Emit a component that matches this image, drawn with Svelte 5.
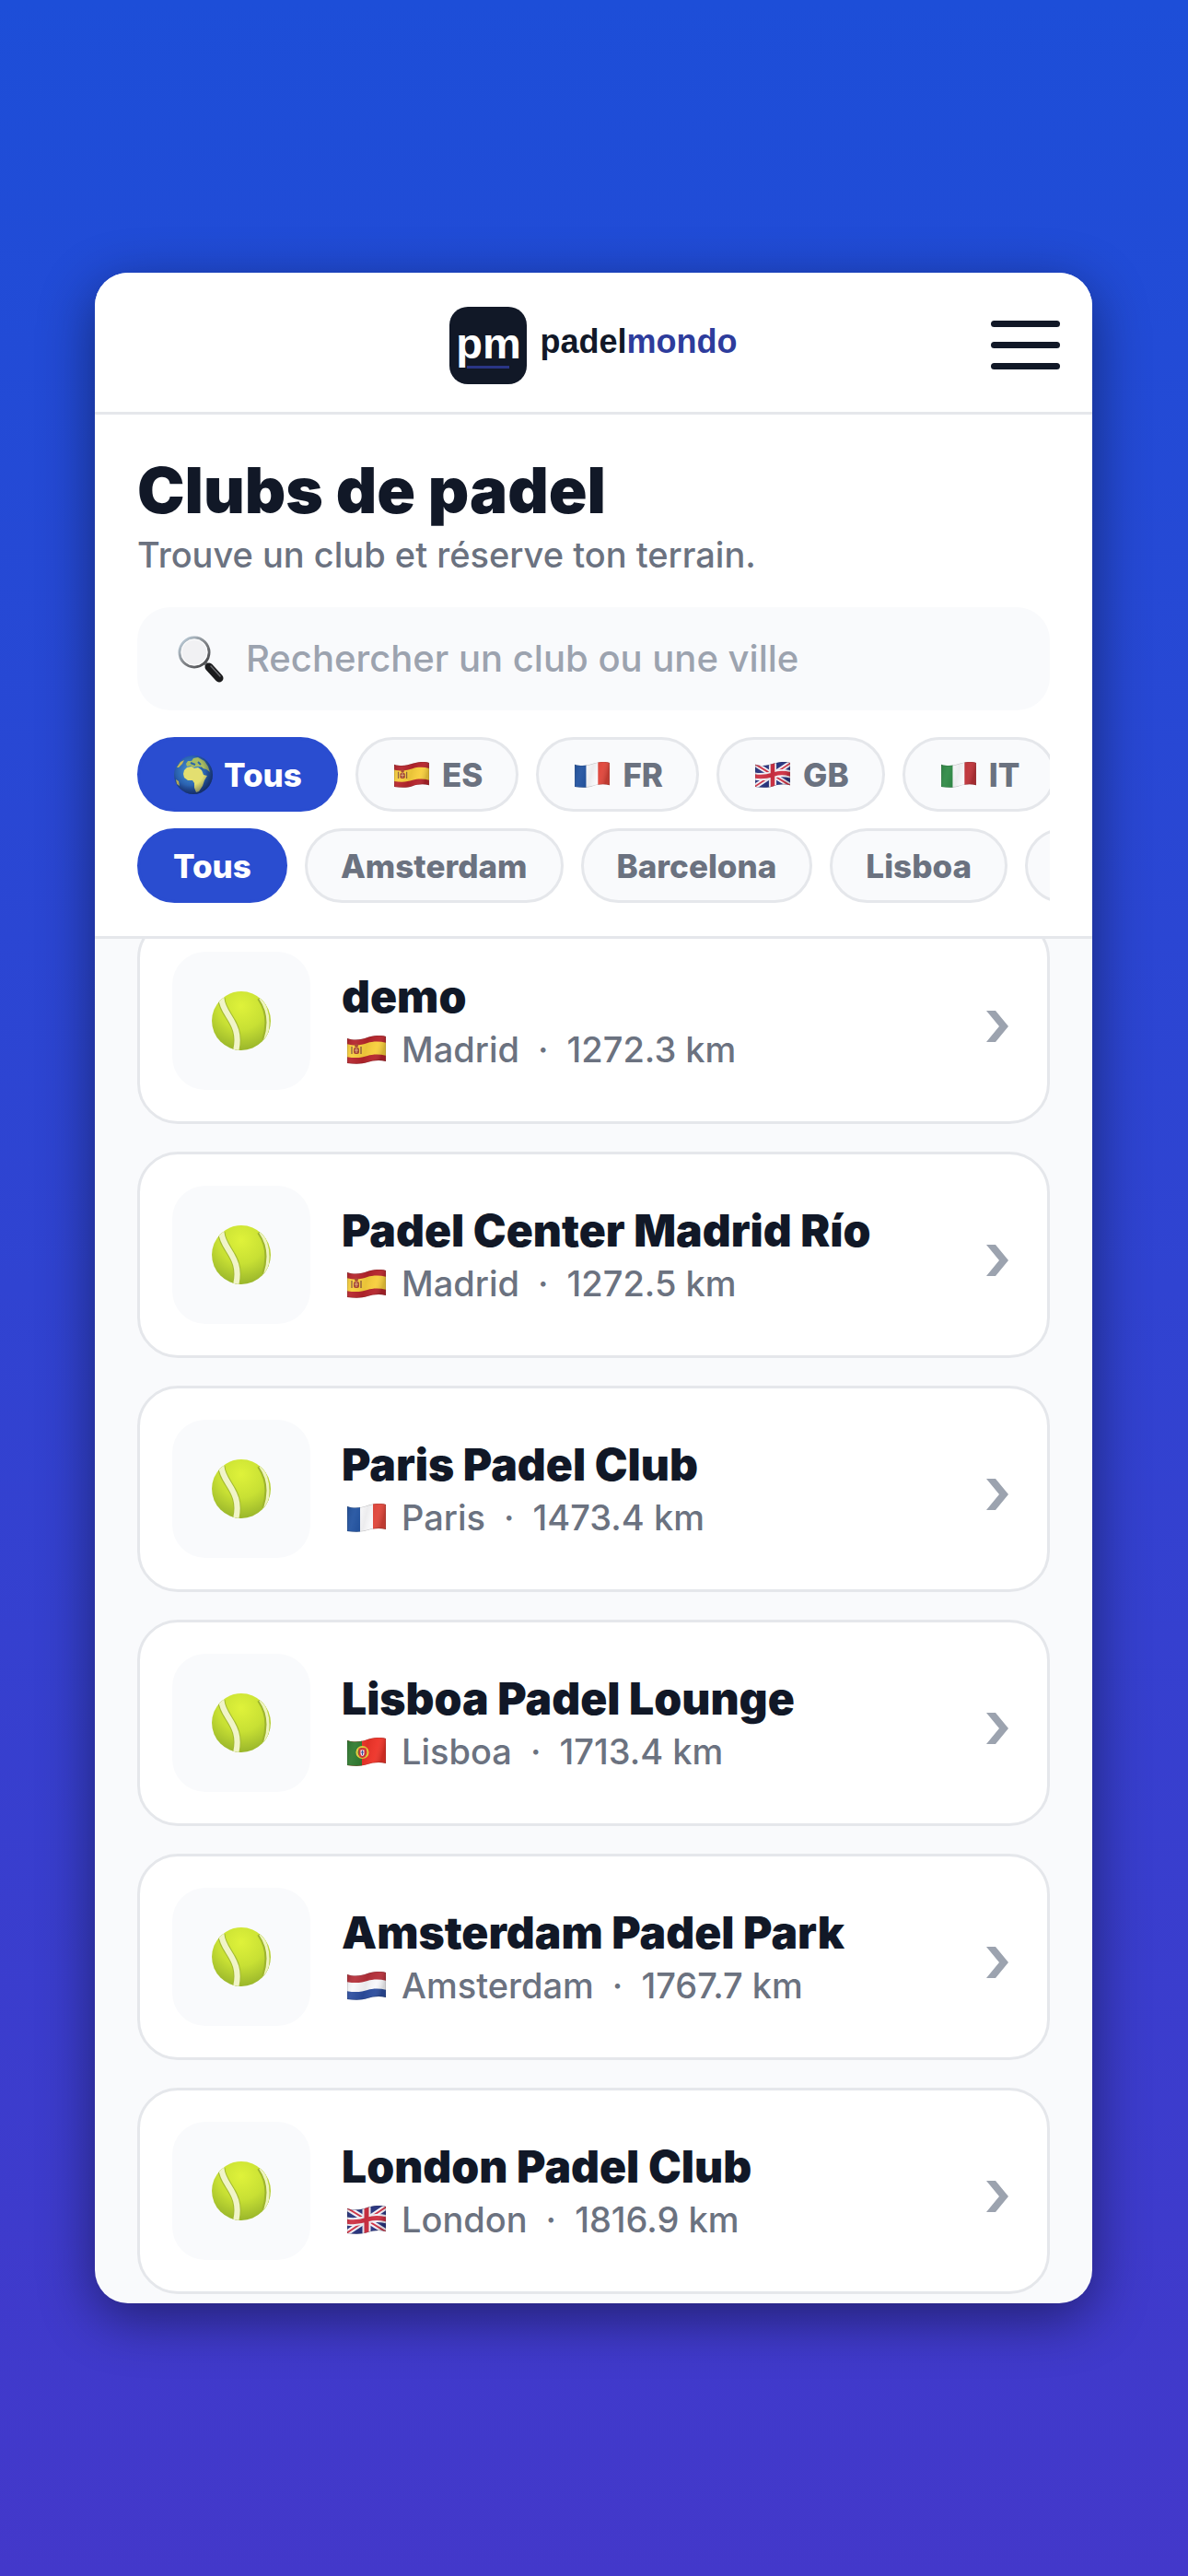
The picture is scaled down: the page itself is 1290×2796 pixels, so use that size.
<script lang="ts">
  let query = $state('');
  let country = $state('ALL');
  let city = $state('ALL');

  const countries = ['ALL', 'ES', 'FR', 'GB', 'IT'];
  const cities = ['ALL', 'Amsterdam', 'Barcelona', 'Lisboa', 'London'];

  const clubs = [
    { name: 'demo', city: 'Madrid', flag: 'ES', distance: '1272.3 km' },
    { name: 'Padel Center Madrid Río', city: 'Madrid', flag: 'ES', distance: '1272.5 km' },
    { name: 'Paris Padel Club', city: 'Paris', flag: 'FR', distance: '1473.4 km' },
    { name: 'Lisboa Padel Lounge', city: 'Lisboa', flag: 'PT', distance: '1713.4 km' },
    { name: 'Amsterdam Padel Park', city: 'Amsterdam', flag: 'NL', distance: '1767.7 km' },
    { name: 'London Padel Club', city: 'London', flag: 'GB', distance: '1816.9 km' }
  ];
</script>

{#snippet flag(code)}
  <svg class="flag" viewBox="0 0 42 31" aria-hidden="true">
    <g clip-path="url(#flag-wave)">
      {#if code === 'ES'}
        <rect width="42" height="31" fill="#b5242b" />
        <path d="M-1 9c10 3 17 1 23-1s14-2 21 0v14c-7-2-15-2-21 0s-13 3-23 1z" fill="#f8cf3c" />
        <circle cx="10" cy="11" r="2" fill="#a5442c" />
        <rect x="7" y="13" width="6" height="7" rx="2" fill="#a5402c" />
        <path d="M5 12v8M15 12v8" stroke="#8d5a3c" stroke-width="1.4" />
        <path d="M8 16h4M10 13v6" stroke="#e9c08a" stroke-width=".8" />
      {:else if code === 'FR'}
        <rect width="14" height="31" fill="#2152a0" />
        <rect x="14" width="14" height="31" fill="#fbfbfd" />
        <rect x="28" width="14" height="31" fill="#e0453a" />
      {:else if code === 'IT'}
        <rect width="14" height="31" fill="#2f8a45" />
        <rect x="14" width="14" height="31" fill="#fbfbfd" />
        <rect x="28" width="14" height="31" fill="#bf3238" />
      {:else if code === 'GB'}
        <rect width="42" height="31" fill="#27337f" />
        <path d="M-1 2 43 29M-1 30 43 1" stroke="#f4f2f8" stroke-width="6" />
        <path d="M-1 2 43 29M-1 30 43 1" stroke="#cf2f42" stroke-width="2" />
        <path d="M21 0v31M-1 17c10 2 17 0 23-2s14-2 21 0" stroke="#f4f2f8" stroke-width="9" fill="none" />
        <path d="M21 0v31M-1 17c10 2 17 0 23-2s14-2 21 0" stroke="#cf2f42" stroke-width="5" fill="none" />
      {:else if code === 'PT'}
        <rect width="42" height="31" fill="#ee3328" />
        <rect width="16" height="31" fill="#2f7a2f" />
        <circle cx="16.500" cy="16" r="6" fill="none" stroke="#e8cf3a" stroke-width="2.200" />
        <path d="M12.500 11.500h8v6q0 4-4 4.500-4-.5-4-4.500z" fill="#d8343a" />
        <path d="M14.500 13.500h4v4q0 2-2 2.500-2-.5-2-2.500z" fill="#f6f4fa" />
        <path d="M16.500 14v5M15 16h3" stroke="#3b4fa5" stroke-width="1" />
      {:else}
        <rect width="42" height="31" fill="#f8f8fb" />
        <path d="M-1-2h44v12c-7-2-15-2-21 0s-13 3-23 1z" fill="#b5303a" />
        <path d="M-1 21c10 2 17 1 23-1s14-2 21 0v13H-1z" fill="#2c4d9e" />
      {/if}
      <rect width="42" height="31" fill="url(#flag-shade)" />
      <path
        d="M0 3c9 3 16 1 22-1s14-3 20-1v27c-7-2-14-1-20 1s-13 2-22 1z"
        fill="none"
        stroke="#202020"
        stroke-opacity=".25"
        stroke-width="1"
      />
    </g>
  </svg>
{/snippet}

{#snippet globe()}
  <svg class="globe" viewBox="0 0 44 44" aria-hidden="true">
    <circle cx="22" cy="22" r="21" fill="url(#ocean)" />
    <path d="M12 17l3-3 5-1 3 2 4-1 4 3 2 5 4 1-3 5-2 6-4 6-3 1-2-5 0-5-2-3-5 0-4-3-1-4z" fill="#e3df70" />
    <path d="M14 10l2-3 4 0 2-3 5-1 7 4 4 6 2 6-4-3-4-1-3-2-4 0-3 1-3-2-4 1z" fill="#a9bd62" />
    <path d="M3 27l3 2 1 5-3-2zM4 14l4-6 4-2-2 4-4 4z" fill="#c9b85a" />
    <path d="M19 9l5 2M27 8l3 3M30 14l5 5" stroke="#2c67a8" stroke-width="2" />
    <circle cx="22" cy="22" r="21" fill="url(#globe-shade)" />
  </svg>
{/snippet}

<svg class="defs" width="0" height="0" aria-hidden="true">
  <defs>
    <clipPath id="flag-wave">
      <path d="M0 3c9 3 16 1 22-1s14-3 20-1v27c-7-2-14-1-20 1s-13 2-22 1z" />
    </clipPath>
    <clipPath id="ball-edge">
      <circle cx="32" cy="32" r="31" />
    </clipPath>
    <linearGradient id="flag-shade" x1="0" x2="1" y1="0" y2="0.2">
      <stop offset="0" stop-color="#000" stop-opacity=".12" />
      <stop offset=".25" stop-color="#fff" stop-opacity=".06" />
      <stop offset=".55" stop-color="#000" stop-opacity=".06" />
      <stop offset=".8" stop-color="#fff" stop-opacity=".04" />
      <stop offset="1" stop-color="#000" stop-opacity=".15" />
    </linearGradient>
    <radialGradient id="ocean" cx=".45" cy=".4" r=".6">
      <stop offset="0" stop-color="#4f9bd6" />
      <stop offset=".6" stop-color="#2c66b4" />
      <stop offset="1" stop-color="#1f3f86" />
    </radialGradient>
    <radialGradient id="globe-shade" cx=".4" cy=".4" r=".62">
      <stop offset=".6" stop-color="#0a1c4a" stop-opacity="0" />
      <stop offset="1" stop-color="#0a1c4a" stop-opacity=".5" />
    </radialGradient>
    <radialGradient id="ball" cx=".5" cy=".25" r=".8">
      <stop offset="0" stop-color="#dff23a" />
      <stop offset=".5" stop-color="#c8e034" />
      <stop offset="1" stop-color="#93b02a" />
    </radialGradient>
    <linearGradient id="rim" x1="0" x2="1" y1="0" y2="1">
      <stop offset="0" stop-color="#c3d6e4" />
      <stop offset=".5" stop-color="#85888c" />
      <stop offset="1" stop-color="#3c3c3e" />
    </linearGradient>
  </defs>
</svg>

<div class="page">
  <main class="panel">
    <header class="topbar">
      <a class="brand" href="/" aria-label="padelmondo">
        <span class="mark"><span class="initials">pm</span></span>
        <span class="wordmark">padel<span class="accent">mondo</span></span>
      </a>
      <button class="menu" type="button" aria-label="Menu">
        <span></span><span></span><span></span>
      </button>
    </header>

    <section class="intro">
      <h1>Clubs de padel</h1>
      <p class="subtitle">Trouve un club et réserve ton terrain.</p>

      <label class="search">
        <svg class="lens" viewBox="0 0 50 52" aria-hidden="true">
          <path d="M30 31l5 5" stroke="#77797c" stroke-width="4" />
          <path d="M34 35l11 12" stroke="#1b1b1d" stroke-width="9" stroke-linecap="round" />
          <path d="M36 34l10 11" stroke="#6a6a6e" stroke-width="1.500" stroke-linecap="round" />
          <circle cx="18" cy="19" r="16" fill="#f1f1f3" stroke="url(#rim)" stroke-width="3" />
          <circle cx="18" cy="19" r="14" fill="none" stroke="#fff" stroke-width="1" />
        </svg>
        <input type="text" bind:value={query} placeholder="Rechercher un club ou une ville" aria-label="Rechercher un club ou une ville" />
      </label>

      <div class="chips">
        {#each countries as code}
          <button class="chip" class:active={country === code} type="button" onclick={() => (country = code)}>
            {#if code === 'ALL'}
              {@render globe()}<span>Tous</span>
            {:else}
              {@render flag(code)}<span>{code}</span>
            {/if}
          </button>
        {/each}
      </div>

      <div class="chips cities">
        {#each cities as name}
          <button class="chip" class:active={city === name} type="button" onclick={() => (city = name)}>
            {name === 'ALL' ? 'Tous' : name}
          </button>
        {/each}
      </div>
    </section>

    <div class="results">
      <ul>
        {#each clubs as club}
          <li>
            <a class="club" href="#{club.flag}">
              <span class="thumb">
                <svg viewBox="0 0 64 64" aria-hidden="true">
                  <circle cx="32" cy="32" r="31" fill="url(#ball)" />
                  <g clip-path="url(#ball-edge)" fill="none">
                    <path d="M11 8C12 27 34 34 26 65" stroke="#a3ba30" stroke-width="8" />
                    <path d="M11 8C12 27 34 34 26 65" stroke="#f0f4c8" stroke-width="6" />
                    <path d="M51 8c9 13 10 29 5 44" stroke="#9db42e" stroke-width="5" />
                    <path d="M52 8c9 13 10 29 5 44" stroke="#eef4bd" stroke-width="3" />
                  </g>
                </svg>
              </span>
              <span class="details">
                <span class="name">{club.name}</span>
                <span class="meta">
                  {@render flag(club.flag)}
                  <span>{club.city}</span>
                  <span class="dot">·</span>
                  <span>{club.distance}</span>
                </span>
              </span>
              <svg class="chevron" viewBox="0 0 24 34" aria-hidden="true">
                <path d="M0 0h10l14 17-14 17H0l14-17z" fill="#9ca3af" />
              </svg>
            </a>
          </li>
        {/each}
      </ul>
    </div>
  </main>
</div>

<style>
  :global(body) {
    margin: 0;
  }

  .defs {
    position: absolute;
  }

  .page {
    box-sizing: border-box;
    height: 100vh;
    display: flex;
    padding: 296px 104px 296px 103px;
    background: linear-gradient(180deg, #1d4ed8, #4338ca);
    font-family: Inter, 'Liberation Sans', sans-serif;
    color: #111827;
  }

  .panel {
    flex: 1;
    min-width: 0;
    display: flex;
    flex-direction: column;
    overflow: hidden;
    border-radius: 36px;
    background: #f9fafc;
    box-shadow: 0 16px 60px rgba(0, 0, 0, 0.45);
  }

  .topbar {
    display: grid;
    grid-template-columns: 1fr auto 1fr;
    align-items: center;
    padding: 36px 35px 30px;
    height: 85px;
    border-bottom: 3px solid #e5e7eb;
    background: #fff;
  }

  .brand {
    grid-column: 2;
    display: flex;
    align-items: center;
    gap: 14px;
    font-family: 'Liberation Sans', Arial, sans-serif;
    font-weight: 700;
    color: #111827;
    text-decoration: none;
  }

  .mark {
    display: flex;
    flex-direction: column;
    align-items: center;
    width: 84px;
    height: 84px;
    border-radius: 20px;
    background: #111827;
    color: #fff;
  }

  .mark::after {
    content: '';
    width: 46px;
    height: 3px;
    background: #2a3585;
  }

  .initials {
    height: 64px;
    font-size: 47px;
    line-height: 80px;
  }

  .wordmark {
    font-size: 36px;
    line-height: 40px;
    padding-bottom: 8px;
  }

  .accent {
    color: #2d3c9c;
  }

  .menu {
    justify-self: end;
    display: flex;
    flex-direction: column;
    gap: 16px;
    padding: 0;
    border: 0;
    background: none;
  }

  .menu span {
    width: 75px;
    height: 7px;
    border-radius: 4px;
    background: #111827;
  }

  .intro {
    padding: 42px 46px 36px;
    border-bottom: 3px solid #e5e7eb;
    background: #fff;
  }

  h1 {
    margin: 0;
    font-size: 69px;
    line-height: 80px;
    font-weight: 900;
  }

  .subtitle {
    margin: 6px 0 33px;
    font-size: 38px;
    line-height: 48px;
    font-weight: 500;
    color: #6b7280;
  }

  .search {
    display: flex;
    align-items: center;
    gap: 24px;
    height: 112px;
    padding: 0 44px;
    border-radius: 36px;
    background: #f9fafc;
  }

  .lens {
    flex: none;
    width: 50px;
    height: 52px;
  }

  input {
    flex: 1;
    min-width: 0;
    padding: 0;
    border: 0;
    outline: 0;
    background: none;
    font: 500 40px/48px Inter, 'Liberation Sans', sans-serif;
    color: #111827;
  }

  input::placeholder {
    color: #9ca3af;
    opacity: 1;
  }

  .chips {
    display: flex;
    gap: 19px;
    margin-top: 29px;
    overflow: hidden;
  }

  .cities {
    margin-top: 18px;
  }

  .chip {
    flex: none;
    display: flex;
    align-items: center;
    gap: 11px;
    height: 81px;
    padding: 0 36px;
    border: 3px solid #e5e7eb;
    border-radius: 41px;
    background: #f9fafc;
    font: 800 35px/42px Inter, 'Liberation Sans', sans-serif;
    color: #6b7280;
  }

  .chip.active {
    border-color: #2a4dd0;
    background: #2a4dd0;
    color: #fff;
  }

  .chip .flag {
    width: 38px;
    height: 28px;
    margin: 0 3px;
  }

  .globe {
    width: 44px;
    height: 44px;
  }

  .results {
    flex: 1;
    min-height: 0;
    overflow: hidden;
    padding: 0 46px;
  }

  /* The list rests slightly scrolled under the filters. */
  ul {
    display: grid;
    gap: 30px;
    margin: -23px 0 0;
    padding: 0;
    list-style: none;
  }

  .club {
    display: flex;
    align-items: center;
    gap: 34px;
    padding: 34px 42px 34px 35px;
    border: 3px solid #e5e7eb;
    border-radius: 44px;
    background: #fff;
    color: inherit;
    text-decoration: none;
  }

  .thumb {
    flex: none;
    display: grid;
    place-items: center;
    width: 150px;
    height: 150px;
    border-radius: 36px;
    background: #f9fafc;
  }

  .thumb svg {
    width: 66px;
    height: 66px;
  }

  .details {
    flex: 1;
    min-width: 0;
    display: grid;
    gap: 6px;
  }

  .name {
    font-size: 48px;
    line-height: 56px;
    font-weight: 900;
  }

  .meta {
    display: flex;
    align-items: center;
    font-size: 38px;
    line-height: 46px;
    font-weight: 500;
    color: #6b7280;
  }

  .meta .flag {
    width: 42px;
    height: 31px;
    margin: 0 17px 0 6px;
  }

  .dot {
    margin: 0 20px;
  }

  .chevron {
    flex: none;
    width: 24px;
    height: 34px;
    margin-top: 12px;
  }
</style>
